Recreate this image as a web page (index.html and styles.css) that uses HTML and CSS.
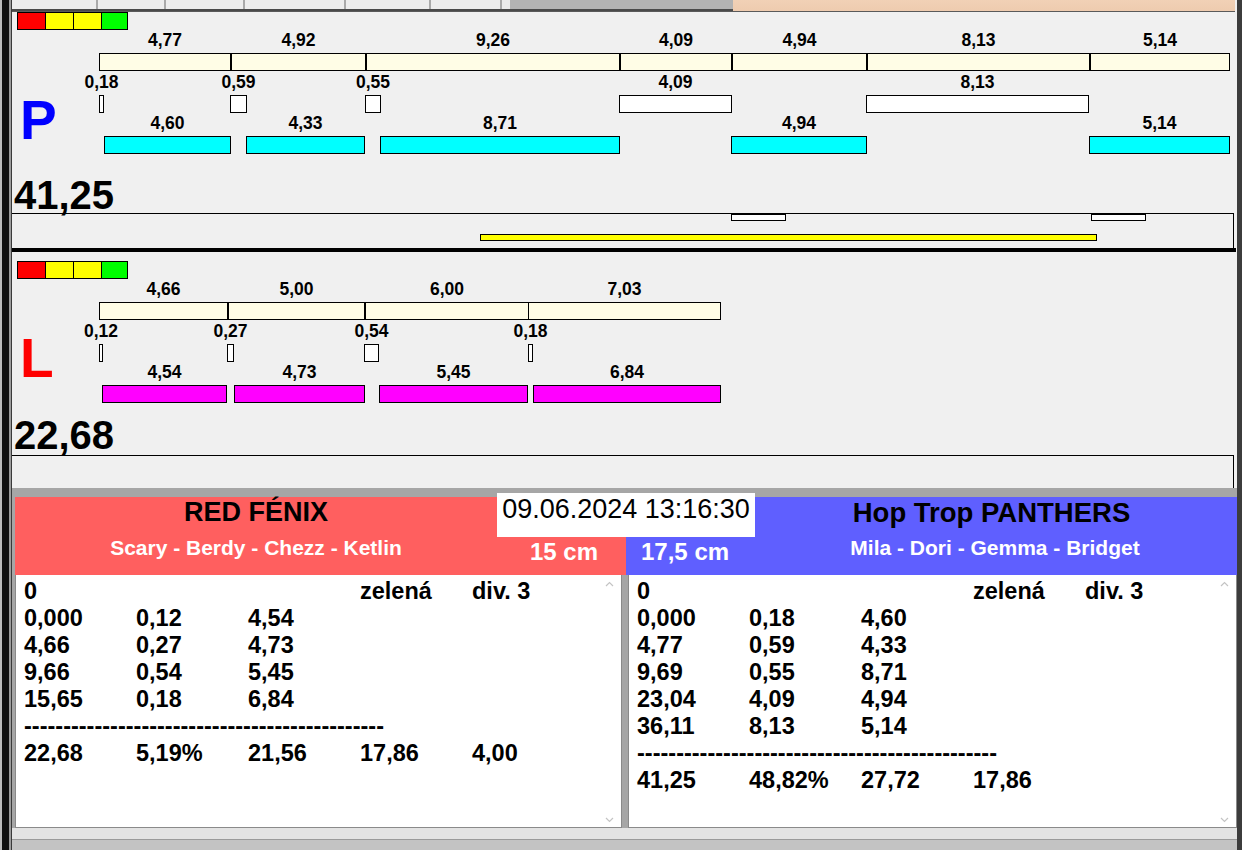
FILE: index.html
```html
<!DOCTYPE html>
<html lang="cs">
<head>
<meta charset="utf-8">
<title>Výsledky</title>
<link rel="stylesheet" href="styles.css">
</head>
<body>
<div class="app">
  <div class="lstrip"></div>
  <div class="main">
    <div class="tabs">
      <div class="tabset">
        <span class="tab" style="width:86px"></span>
        <span class="tab" style="width:68px"></span>
        <span class="tab" style="width:79px"></span>
        <span class="tab" style="width:101px"></span>
        <span class="tab" style="width:85px"></span>
        <span class="tab" style="width:71px"></span>
      </div>
      <div class="tabgray"></div>
      <div class="tabpeach"></div>
    </div>

    <section class="panel panel-p">
      <div class="lights"><span class="lr"></span><span class="ly"></span><span class="ly"></span><span class="lg"></span></div>
      <div class="pbody">
        <div class="side"><span class="letter letter-p">P</span></div>
        <div class="chart">
          <div class="track">
            <div class="item" style="left:0;width:132px"><span class="lbl">4,77</span><span class="bar cream"></span></div>
            <div class="item" style="left:132px;width:135px"><span class="lbl">4,92</span><span class="bar cream"></span></div>
            <div class="item" style="left:267px;width:254px"><span class="lbl">9,26</span><span class="bar cream"></span></div>
            <div class="item" style="left:521px;width:112px"><span class="lbl">4,09</span><span class="bar cream"></span></div>
            <div class="item" style="left:633px;width:135px"><span class="lbl">4,94</span><span class="bar cream"></span></div>
            <div class="item" style="left:768px;width:223px"><span class="lbl">8,13</span><span class="bar cream"></span></div>
            <div class="item" style="left:991px;width:140px"><span class="lbl">5,14</span><span class="bar cream"></span></div>
          </div>
          <div class="track track-mid">
            <div class="item" style="left:0;width:5px"><span class="lbl">0,18</span><span class="bar gapbox"></span></div>
            <div class="item" style="left:131px;width:17px"><span class="lbl">0,59</span><span class="bar gapbox"></span></div>
            <div class="item" style="left:266px;width:16px"><span class="lbl">0,55</span><span class="bar gapbox"></span></div>
            <div class="item" style="left:520px;width:113px"><span class="lbl">4,09</span><span class="bar gapbox"></span></div>
            <div class="item" style="left:767px;width:223px"><span class="lbl">8,13</span><span class="bar gapbox"></span></div>
          </div>
          <div class="track">
            <div class="item" style="left:5px;width:127px"><span class="lbl">4,60</span><span class="bar cyan"></span></div>
            <div class="item" style="left:147px;width:119px"><span class="lbl">4,33</span><span class="bar cyan"></span></div>
            <div class="item" style="left:281px;width:240px"><span class="lbl">8,71</span><span class="bar cyan"></span></div>
            <div class="item" style="left:632px;width:136px"><span class="lbl">4,94</span><span class="bar cyan"></span></div>
            <div class="item" style="left:990px;width:141px"><span class="lbl">5,14</span><span class="bar cyan"></span></div>
          </div>
        </div>
      </div>
      <div class="total total-p">41,25</div>
      <div class="tbar tbar-p">
        <span class="mark" style="left:719px"></span>
        <span class="mark" style="left:1079px"></span>
        <span class="ybar" style="left:468px;width:617px"></span>
      </div>
    </section>

    <div class="thick"></div>

    <section class="panel panel-l">
      <div class="lights"><span class="lr"></span><span class="ly"></span><span class="ly"></span><span class="lg"></span></div>
      <div class="pbody">
        <div class="side"><span class="letter letter-l">L</span></div>
        <div class="chart">
          <div class="track">
            <div class="item" style="left:0;width:129px"><span class="lbl">4,66</span><span class="bar cream"></span></div>
            <div class="item" style="left:129px;width:137px"><span class="lbl">5,00</span><span class="bar cream"></span></div>
            <div class="item" style="left:266px;width:164px"><span class="lbl">6,00</span><span class="bar cream"></span></div>
            <div class="item" style="left:429px;width:193px"><span class="lbl">7,03</span><span class="bar cream"></span></div>
          </div>
          <div class="track track-mid">
            <div class="item" style="left:0;width:4px"><span class="lbl">0,12</span><span class="bar gapbox"></span></div>
            <div class="item" style="left:128px;width:7px"><span class="lbl">0,27</span><span class="bar gapbox"></span></div>
            <div class="item" style="left:265px;width:15px"><span class="lbl">0,54</span><span class="bar gapbox"></span></div>
            <div class="item" style="left:429px;width:5px"><span class="lbl">0,18</span><span class="bar gapbox"></span></div>
          </div>
          <div class="track">
            <div class="item" style="left:3px;width:125px"><span class="lbl">4,54</span><span class="bar mag"></span></div>
            <div class="item" style="left:135px;width:131px"><span class="lbl">4,73</span><span class="bar mag"></span></div>
            <div class="item" style="left:280px;width:149px"><span class="lbl">5,45</span><span class="bar mag"></span></div>
            <div class="item" style="left:434px;width:188px"><span class="lbl">6,84</span><span class="bar mag"></span></div>
          </div>
        </div>
      </div>
      <div class="total total-l">22,68</div>
      <div class="tbar tbar-l"></div>
    </section>

    <div class="lower">
      <div class="teams">
        <div class="tname tname-red">
          <div class="ttitle">RED FÉNIX</div>
          <div class="tplayers">Scary - Berdy - Chezz - Ketlin</div>
        </div>
        <div class="date">09.06.2024 13:16:30</div>
        <div class="cm cm-red">15 cm</div>
        <div class="cm cm-blue">17,5 cm</div>
        <div class="tname tname-blue">
          <div class="ttitle">Hop Trop PANTHERS</div>
          <div class="tplayers">Mila - Dori - Gemma - Bridget</div>
        </div>
      </div>

      <div class="texts">
        <div class="tbox tbox-left">
          <div class="row"><span>0</span><span></span><span></span><span>zelená</span><span>div. 3</span></div>
          <div class="row"><span>0,000</span><span>0,12</span><span>4,54</span></div>
          <div class="row"><span>4,66</span><span>0,27</span><span>4,73</span></div>
          <div class="row"><span>9,66</span><span>0,54</span><span>5,45</span></div>
          <div class="row"><span>15,65</span><span>0,18</span><span>6,84</span></div>
          <div class="row dash">----------------------------------------------</div>
          <div class="row"><span>22,68</span><span>5,19%</span><span>21,56</span><span>17,86</span><span>4,00</span></div>
          <svg class="sarrow up" width="9" height="6" viewBox="0 0 9 6"><polyline points="1,5 4.5,1.5 8,5" fill="none" stroke="#c4c4c4" stroke-width="1.2"/></svg>
          <svg class="sarrow down" width="9" height="6" viewBox="0 0 9 6"><polyline points="1,1 4.5,4.5 8,1" fill="none" stroke="#c4c4c4" stroke-width="1.2"/></svg>
        </div>
        <div class="tbox tbox-right">
          <div class="row"><span>0</span><span></span><span></span><span>zelená</span><span>div. 3</span></div>
          <div class="row"><span>0,000</span><span>0,18</span><span>4,60</span></div>
          <div class="row"><span>4,77</span><span>0,59</span><span>4,33</span></div>
          <div class="row"><span>9,69</span><span>0,55</span><span>8,71</span></div>
          <div class="row"><span>23,04</span><span>4,09</span><span>4,94</span></div>
          <div class="row"><span>36,11</span><span>8,13</span><span>5,14</span></div>
          <div class="row dash">----------------------------------------------</div>
          <div class="row"><span>41,25</span><span>48,82%</span><span>27,72</span><span>17,86</span></div>
          <svg class="sarrow up" width="9" height="6" viewBox="0 0 9 6"><polyline points="1,5 4.5,1.5 8,5" fill="none" stroke="#c4c4c4" stroke-width="1.2"/></svg>
          <svg class="sarrow down" width="9" height="6" viewBox="0 0 9 6"><polyline points="1,1 4.5,4.5 8,1" fill="none" stroke="#c4c4c4" stroke-width="1.2"/></svg>
        </div>
      </div>
      <div class="status"></div>
    </div>
  </div>
  <div class="rstrip"></div>
</div>
</body>
</html>
```

FILE: styles.css
```css
* { box-sizing: border-box; }

body {
  margin: 0;
  background: #f0f0f0;
  font-family: "Liberation Sans", Arial, sans-serif;
  color: #000;
  overflow: hidden;
}

.app {
  display: flex;
  width: 1242px;
  height: 850px;
}

.lstrip {
  width: 12px;
  flex: none;
  background: linear-gradient(to right, #bdbdbd 0 2px, #111 2px 9px, #9c9c9c 9px 11px, #3a3a3a 11px 12px);
}

.main {
  width: 1225px;
  flex: none;
  display: flex;
  flex-direction: column;
}

.rstrip {
  flex: 1;
  background: #3c3c3c;
}

/* tab strip */
.tabs {
  height: 11px;
  display: flex;
  margin-right: 2px;
}
.tabset {
  width: 498px;
  display: flex;
  background: #e9e9e9;
  border-bottom: 2px solid #4a4a4a;
}
.tab {
  height: 100%;
  border-right: 2px solid #a9a9a9;
  background: #ededed;
}
.tabgray {
  width: 223px;
  background: #b3b3b3;
  border-bottom: 2px solid #4a4a4a;
}
.tabpeach {
  flex: 1;
  background: linear-gradient(#f1d1b6, #eecbaf);
}

/* chart panels */
.panel {
  margin-right: 2px;
  background: #f0f0f0;
}
.panel-p {
  height: 237px;
  border-top: 1px solid #5a5a5a;
}
.panel-l {
  height: 236px;
  padding-top: 9px;
}

.lights {
  display: flex;
  width: 111px;
  height: 18px;
  margin-left: 5px;
  border: 1px solid #000;
}
.lights span { height: 100%; }
.lights span + span { border-left: 1px solid #000; }
.lr { width: 27px; background: #ff0000; }
.ly { width: 28px; background: #ffff00; }
.lg { flex: 1; background: #00ff00; }

.pbody {
  display: flex;
}
.side {
  width: 87px;
  flex: none;
}
.letter {
  display: block;
  font-size: 55px;
  line-height: 54px;
  font-weight: bold;
  padding-left: 8px;
}
.letter-p { color: #0000ff; padding-top: 63px; }
.letter-l { color: #ff0000; padding-top: 52px; }

.chart {
  width: 1136px;
}
.track {
  position: relative;
  height: 41px;
}
.track-mid { height: 42px; }

.item {
  position: absolute;
  top: 0;
  bottom: 0;
  display: flex;
  flex-direction: column;
  justify-content: flex-end;
  align-items: center;
}
.lbl {
  font-size: 17.5px;
  font-weight: bold;
  line-height: 17px;
  margin-bottom: 4px;
  white-space: nowrap;
}
.bar {
  align-self: stretch;
  flex: none;
  height: 18px;
  border: 1px solid #000;
}
.cream { background: #fffde6; }
.gapbox { background: #ffffff; }
.cyan { background: #00ffff; }
.mag { background: #ff00ff; }

.total {
  font-size: 40px;
  font-weight: bold;
  line-height: 38px;
  padding-left: 2px;
  white-space: nowrap;
}
.total-p { margin-top: 22px; height: 37px; }
.total-l { margin-top: 13px; height: 39px; }

.tbar {
  position: relative;
  margin-right: 1px;
  border-top: 1px solid #000;
  border-right: 1px solid #000;
}
.tbar-p { height: 35px; }
.tbar-l { height: 33px; }

.mark {
  position: absolute;
  top: 0;
  width: 55px;
  height: 7px;
  background: #fff;
  border: 1px solid #000;
}
.ybar {
  position: absolute;
  top: 20px;
  height: 7px;
  background: #ffff00;
  border: 1px solid #000;
}

.thick {
  height: 4px;
  margin-right: 1px;
  background: #000;
}

/* lower area */
.lower {
  background: #a6a6a6;
  padding-top: 9px;
  padding-left: 3px;
  height: 362px;
  display: flex;
  flex-direction: column;
}

.teams {
  display: grid;
  grid-template-columns: 482px 129px 129px 482px;
  grid-template-rows: 40px 38px;
}
.tname {
  grid-row: 1 / 3;
  display: flex;
  flex-direction: column;
  align-items: center;
  padding-top: 2px;
}
.tname-red { grid-column: 1; background: #ff5f5f; }
.tname-blue { grid-column: 4; background: #5f5fff; }
.ttitle {
  font-size: 27px;
  line-height: 27px;
  font-weight: bold;
  color: #000;
  white-space: nowrap;
}
.tname-blue .ttitle {
  font-size: 27.5px;
  margin-right: 9px;
}
.tplayers {
  margin-top: 11px;
  font-size: 21px;
  line-height: 21px;
  font-weight: bold;
  color: #fff;
  white-space: nowrap;
}
.tname-blue .tplayers { margin-right: 2px; }
.date {
  grid-column: 2 / 4;
  grid-row: 1;
  margin-top: -4px;
  height: 44px;
  background: #fff;
  font-size: 27px;
  line-height: 33px;
  text-align: center;
  white-space: nowrap;
}
.cm {
  grid-row: 2;
  font-size: 24px;
  line-height: 24px;
  font-weight: bold;
  color: #fff;
  padding-top: 3px;
  white-space: nowrap;
}
.cm-red { grid-column: 2; background: #ff5f5f; text-align: right; padding-right: 28px; }
.cm-blue { grid-column: 3; background: #5f5fff; padding-left: 15px; }

.texts {
  display: flex;
  height: 253px;
  gap: 6px;
}
.tbox {
  position: relative;
  background: #fff;
  border: 1px solid #8a8a8a;
  border-top: none;
  padding: 3px 0 0 8px;
}
.tbox-left { width: 607px; }
.tbox-right { flex: 1; }

.row {
  display: grid;
  grid-template-columns: repeat(5, 112px);
  height: 27px;
  font-size: 23.5px;
  line-height: 27px;
  font-weight: bold;
  white-space: nowrap;
}
.row.dash { display: block; }

.sarrow {
  position: absolute;
  right: 7px;
}
.sarrow.up { top: 6px; }
.sarrow.down { bottom: 4px; }

.status {
  flex: 1;
  background: linear-gradient(#e3e3e3 0 11px, #9a9a9a 11px 12px, #c3c3c3 12px);
  margin-left: -3px;
}
```
